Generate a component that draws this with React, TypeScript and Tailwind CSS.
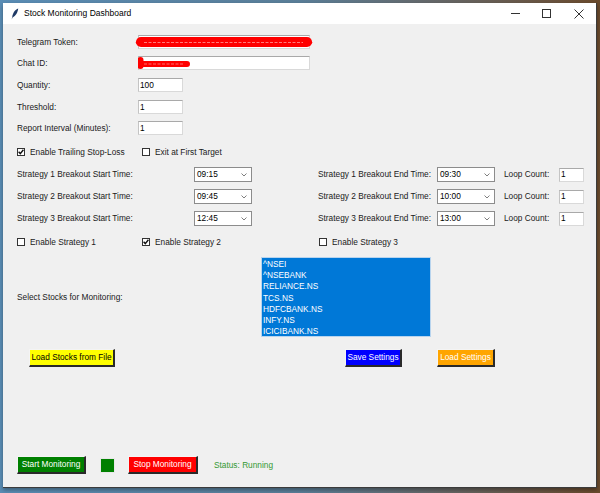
import React from 'react';

const font = "font-['Liberation_Sans',Arial,sans-serif]";

const Entry: React.FC<{ w: string; value?: string; children?: React.ReactNode }> = ({ w, value, children }) => (
  <div className={`relative ${w} h-[14px] bg-white border border-[#d9d9d9] border-t-[#a9a9a9] border-l-[#c4c4c4] flex items-center pl-[1px] text-[8.3px] text-black`}>
    {value}
    {children}
  </div>
);

const Combo: React.FC<{ value: string }> = ({ value }) => (
  <div className="w-[58px] h-[15px] bg-white border border-[#8c8c8c] flex items-center justify-between pl-[2px] pr-[4px] text-[8.3px] text-black">
    <span>{value}</span>
    <svg width="6" height="4" viewBox="0 0 6 4">
      <path d="M0.5 0.5 L3 3 L5.5 0.5" fill="none" stroke="#6f6f6f" strokeWidth="0.9" />
    </svg>
  </div>
);

const Check: React.FC<{ checked?: boolean; label: string; w?: string }> = ({ checked, label, w }) => (
  <div className={`flex items-center ${w ?? ''}`}>
    <div className="w-[8px] h-[8px] bg-white border border-[#333] flex items-center justify-center">
      {checked && (
        <svg width="6" height="6" viewBox="0 0 6 6">
          <path d="M0.6 2.8 L2.3 4.6 L5.4 0.8" fill="none" stroke="#111" strokeWidth="1.4" />
        </svg>
      )}
    </div>
    <span className="ml-[5px] text-[8.3px] text-[#1a1a1a]">{label}</span>
  </div>
);

const TkButton: React.FC<{ w: string; bg: string; fg: string; label: string }> = ({ w, bg, fg, label }) => (
  <div className={`${w} h-[18px] ${bg} ${fg} border-t border-l border-t-[#f4f4f4] border-l-[#f4f4f4] border-r-2 border-b-2 border-r-[#2a2a2a] border-b-[#2a2a2a] flex items-center justify-center text-[8.3px]`}>
    {label}
  </div>
);

const strategies = [
  { n: 1, start: '09:15', end: '09:30' },
  { n: 2, start: '09:45', end: '10:00' },
  { n: 3, start: '12:45', end: '13:00' },
];

const stocks = ['^NSEI', '^NSEBANK', 'RELIANCE.NS', 'TCS.NS', 'HDFCBANK.NS', 'INFY.NS', 'ICICIBANK.NS'];

export default function App() {
  return (
    <div className={`w-[600px] h-[493px] overflow-hidden bg-gradient-to-r from-[#5a8db5] via-[#5a7e98] to-[#6a4a2c] ${font}`}>
      <div className="ml-[3px] pt-[3px]">
        <div className="w-[594px] h-[485px] flex flex-col bg-[#f0f0f0] border-r border-b border-[#3b3b3b] shadow-[0_2px_4px_rgba(0,0,0,0.35)]">
          {/* title bar */}
          <div className="h-[21px] bg-white flex items-center">
            <svg width="8" height="12" viewBox="0 0 8 12" className="ml-[8px]">
              <path d="M7.2 0.6 C4.2 1.6 1.8 5 1.2 9.2 L0.6 11.6 L1.6 9.6 C4.6 8.2 6.8 4.4 7.2 0.6 Z" fill="#1f3a66" />
            </svg>
            <span className="ml-[5px] text-[8.5px] text-black">Stock Monitoring Dashboard</span>
            <div className="ml-auto flex items-center h-full">
              <div className="w-[31px] flex justify-center">
                <div className="w-[9px] h-px bg-[#333]" />
              </div>
              <div className="w-[31px] flex justify-center">
                <div className="w-[9px] h-[9px] border border-[#333]" />
              </div>
              <div className="w-[33px] flex justify-center mr-[1px]">
                <svg width="10" height="10" viewBox="0 0 10 10">
                  <path d="M0.5 0.5 L9.5 9.5 M9.5 0.5 L0.5 9.5" stroke="#333" strokeWidth="1" />
                </svg>
              </div>
            </div>
          </div>

          {/* body */}
          <div className="flex-1 flex flex-col pl-[14px] pt-[11px] text-[8.3px] text-[#1a1a1a]">
            <div className="flex items-center h-[14px]">
              <span className="w-[121px]">Telegram Token:</span>
              <Entry w="w-[172px]">
                <svg width="178" height="14" viewBox="0 0 178 14" className="absolute left-[-4px] top-[-1px]">
                  <path d="M6 7 L172 7" stroke="#ff0000" strokeWidth="10" strokeLinecap="round" />
                  <path d="M2 7.5 L176 7.5" stroke="#ff0000" strokeWidth="2.5" strokeLinecap="round" />
                  <path d="M9 7.5 L168 7.5" stroke="#ff9a9a" strokeWidth="0.8" strokeDasharray="3 1.5" />
                </svg>
              </Entry>
            </div>
            <div className="flex items-center h-[14px] mt-[7px]">
              <span className="w-[121px]">Chat ID:</span>
              <Entry w="w-[172px]">
                <svg width="56" height="14" viewBox="0 0 56 14" className="absolute left-[-1px] top-[-1px]">
                  <path d="M2.5 4 L2.5 10 M3 8 L49 8" stroke="#ff0000" strokeWidth="6" strokeLinecap="round" />
                  <path d="M6 8 L46 8" stroke="#ff9a9a" strokeWidth="0.7" strokeDasharray="3 1.5" />
                </svg>
              </Entry>
            </div>
            <div className="flex items-center h-[14px] mt-[8px]">
              <span className="w-[121px]">Quantity:</span>
              <Entry w="w-[45px]" value="100" />
            </div>
            <div className="flex items-center h-[14px] mt-[8px]">
              <span className="w-[121px]">Threshold:</span>
              <Entry w="w-[45px]" value="1" />
            </div>
            <div className="flex items-center h-[14px] mt-[7px]">
              <span className="w-[121px]">Report Interval (Minutes):</span>
              <Entry w="w-[45px]" value="1" />
            </div>

            <div className="flex items-center h-[14px] mt-[10px]">
              <Check checked label="Enable Trailing Stop-Loss" w="w-[125px]" />
              <Check label="Exit at First Target" />
            </div>

            {strategies.map((s, i) => (
              <div key={s.n} className={`flex items-center h-[15px] ${i === 0 ? 'mt-[8px]' : 'mt-[7px]'}`}>
                <span className="w-[177px]">Strategy {s.n} Breakout Start Time:</span>
                <Combo value={s.start} />
                <span className="ml-[66px] w-[119px]">Strategy {s.n} Breakout End Time:</span>
                <Combo value={s.end} />
                <span className="ml-[9px] w-[55px]">Loop Count:</span>
                <Entry w="w-[25px]" value="1" />
              </div>
            ))}

            <div className="flex items-center h-[14px] mt-[9px]">
              <Check label="Enable Strategy 1" w="w-[125px]" />
              <Check checked label="Enable Strategy 2" w="w-[177px]" />
              <Check label="Enable Strategy 3" />
            </div>

            <div className="flex items-center mt-[8px]">
              <span className="w-[244px]">Select Stocks for Monitoring:</span>
              <div className="w-[170px] h-[80px] bg-[#0078d7] border border-[#b8d4ee] pl-[1px] pt-[1px] text-white text-[8.3px] leading-[11.2px]">
                {stocks.map((s) => (
                  <div key={s}>{s}</div>
                ))}
              </div>
            </div>

            <div className="flex items-center mt-[12px]">
              <div className="ml-[12px]">
                <TkButton w="w-[86px]" bg="bg-[#ffff00]" fg="text-black" label="Load Stocks from File" />
              </div>
              <div className="ml-[230px]">
                <TkButton w="w-[57px]" bg="bg-[#0000ff]" fg="text-white" label="Save Settings" />
              </div>
              <div className="ml-[35px]">
                <TkButton w="w-[58px]" bg="bg-[#ffa500]" fg="text-white" label="Load Settings" />
              </div>
            </div>

            <div className="flex items-center mt-[89px]">
              <TkButton w="w-[69px]" bg="bg-[#008000]" fg="text-white" label="Start Monitoring" />
              <div className="ml-[14px] w-[15px] h-[15px] bg-[#008000] border border-[#e8e8e8]" />
              <div className="ml-[13px]">
                <TkButton w="w-[70px]" bg="bg-[#ff0000]" fg="text-white" label="Stop Monitoring" />
              </div>
              <span className="ml-[16px] text-[#339933]">Status: Running</span>
            </div>
          </div>
        </div>
      </div>
    </div>
  );
}
